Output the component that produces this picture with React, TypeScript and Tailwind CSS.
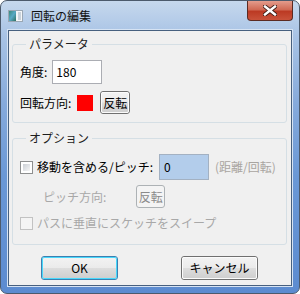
const font = { fontFamily: '"Noto Sans CJK JP", "Noto Sans", sans-serif' };

function WinButton({ label, disabled, primary, className }: { label: string; disabled?: boolean; primary?: boolean; className?: string }) {
	if (disabled) {
		return (
			<div className={`flex items-center justify-center rounded-[3px] border border-[#adb2b5] bg-[#f4f4f4] text-[#8a8a8a] ${className ?? ""}`}>
				{label}
			</div>
		);
	}
	return (
		<div
			className={`rounded-[3px] border ${primary ? "border-[#3c7fb1]" : "border-[#707070]"} ${className ?? ""}`}
		>
			<div
				className={`flex h-full w-full items-center justify-center rounded-[2px] border ${primary ? "border-[#48d8fb]" : "border-[#fbfbfb]"} bg-[linear-gradient(#f2f2f2_0%,#ebebeb_48%,#dddddd_52%,#cfcfcf_100%)] text-black`}
			>
				{label}
			</div>
		</div>
	);
}

function CheckBox({ disabled }: { disabled?: boolean }) {
	return (
		<div className={`h-[13px] w-[13px] border ${disabled ? "border-[#c2c2c2] bg-[#f4f4f4]" : "border-[#8e8f8f] bg-white"} p-[2px]`}>
			<div
				className={`h-full w-full ${disabled ? "bg-[#f4f4f4]" : "bg-[linear-gradient(135deg,#cbcfd5,#f6f6f6)]"}`}
			/>
		</div>
	);
}

function AppIcon() {
	return (
		<svg width="15" height="12" viewBox="0 0 15 12">
			<rect x="0.5" y="0.5" width="14" height="11" fill="#f4f6f8" stroke="#9aa7b4" />
			<rect x="1" y="1" width="7" height="10" fill="url(#g)" />
			<rect x="10" y="2" width="3" height="8" fill="#c9d2da" />
			<defs>
				<linearGradient id="g" x1="0" y1="0" x2="1" y2="1">
					<stop offset="0" stopColor="#3c8a7a" />
					<stop offset="0.5" stopColor="#58a9c6" />
					<stop offset="1" stopColor="#2e6f5e" />
				</linearGradient>
			</defs>
		</svg>
	);
}

export default function App() {
	return (
		<div
			style={font}
			className="flex h-[294px] w-[300px] flex-col rounded-[7px] border border-[#4c5a6c] bg-[linear-gradient(#c6d8ed_0%,#a8c3e5_12%,#86aadb_35%,#6a98d6_60%,#5c8bd0_100%)] text-[12px] text-black"
		>
			<div className="flex h-[29px] shrink-0">
				<div className="flex items-center pl-[7px] pt-[1px]">
					<AppIcon />
					<span className="ml-[8px] leading-[16px] text-[#111]">回転の編集</span>
				</div>
				<div className="ml-auto mr-[6px] h-[20px] w-[46px] rounded-b-[4px] border border-t-0 border-[#5b2a22] bg-[linear-gradient(#e49c8c_0%,#d06a55_45%,#bc3a24_55%,#c9523a_100%)]">
					<div className="flex h-full items-center justify-center">
						<svg width="14" height="11" viewBox="0 0 14 11">
							<path d="M2 1.5 L12 9.5 M12 1.5 L2 9.5" stroke="#3a1a14" strokeWidth="4.2" strokeLinecap="square" />
							<path d="M2 1.5 L12 9.5 M12 1.5 L2 9.5" stroke="#ffffff" strokeWidth="2.4" strokeLinecap="square" />
						</svg>
					</div>
				</div>
			</div>
			<div className="mx-[7px] mb-[7px] flex flex-1 flex-col border border-[#47607f] bg-[#f0f0f0] shadow-[0_0_0_1px_#d6e3f3]">
				<fieldset className="ml-[3px] mr-[4px] mt-[5px] rounded-[3px] border border-[#d5dfe5] pb-[8px] pl-[7px]">
					<legend className="ml-[6px] px-[3px] leading-[16px] text-[#1e1e1e]">パラメータ</legend>
					<div className="mt-[8px] flex h-[24px] items-center">
						<span className="leading-[16px]">角度:</span>
						<div className="ml-[5px] flex h-[24px] w-[50px] items-center border border-[#abadb3] bg-white pl-[3px]">
							180
						</div>
					</div>
					<div className="mt-[7px] flex h-[23px] items-center">
						<span className="leading-[16px]">回転方向:</span>
						<div className="ml-[6px] h-[16px] w-[16px] bg-[#ff0000]" />
						<WinButton label="反転" className="ml-[7px] h-[23px] w-[30px]" />
					</div>
				</fieldset>
				<fieldset className="ml-[3px] mr-[4px] mt-[7px] rounded-[3px] border border-[#d5dfe5] pb-[13px] pl-[7px]">
					<legend className="ml-[6px] px-[3px] leading-[16px] text-[#1e1e1e]">オプション</legend>
					<div className="mt-[8px] flex h-[26px] items-center">
						<CheckBox />
						<span className="ml-[4px] leading-[16px]">移動を含める/ピッチ:</span>
						<div className="ml-[6px] flex h-[26px] w-[50px] items-center border border-[#a3b1c2] bg-[#b3cdeb] pl-[4px]">
							0
						</div>
						<span className="ml-[6px] leading-[16px] text-[#a9a5a0]">(距離/回転)</span>
					</div>
					<div className="mt-[5px] flex h-[23px] items-center">
						<span className="ml-[23px] leading-[16px] text-[#a8a8a8]">ピッチ方向:</span>
						<WinButton label="反転" disabled className="ml-[30px] h-[23px] w-[29px]" />
					</div>
					<div className="mt-[7px] flex h-[16px] items-center">
						<CheckBox disabled />
						<span className="ml-[4px] leading-[16px] text-[#a8a8a8]">パスに垂直にスケッチをスイープ</span>
					</div>
				</fieldset>
				<div className="mt-[11px] flex">
					<WinButton label="OK" primary className="ml-[32px] h-[24px] w-[77px]" />
					<WinButton label="キャンセル" className="ml-[63px] h-[24px] w-[77px]" />
				</div>
			</div>
		</div>
	);
}
